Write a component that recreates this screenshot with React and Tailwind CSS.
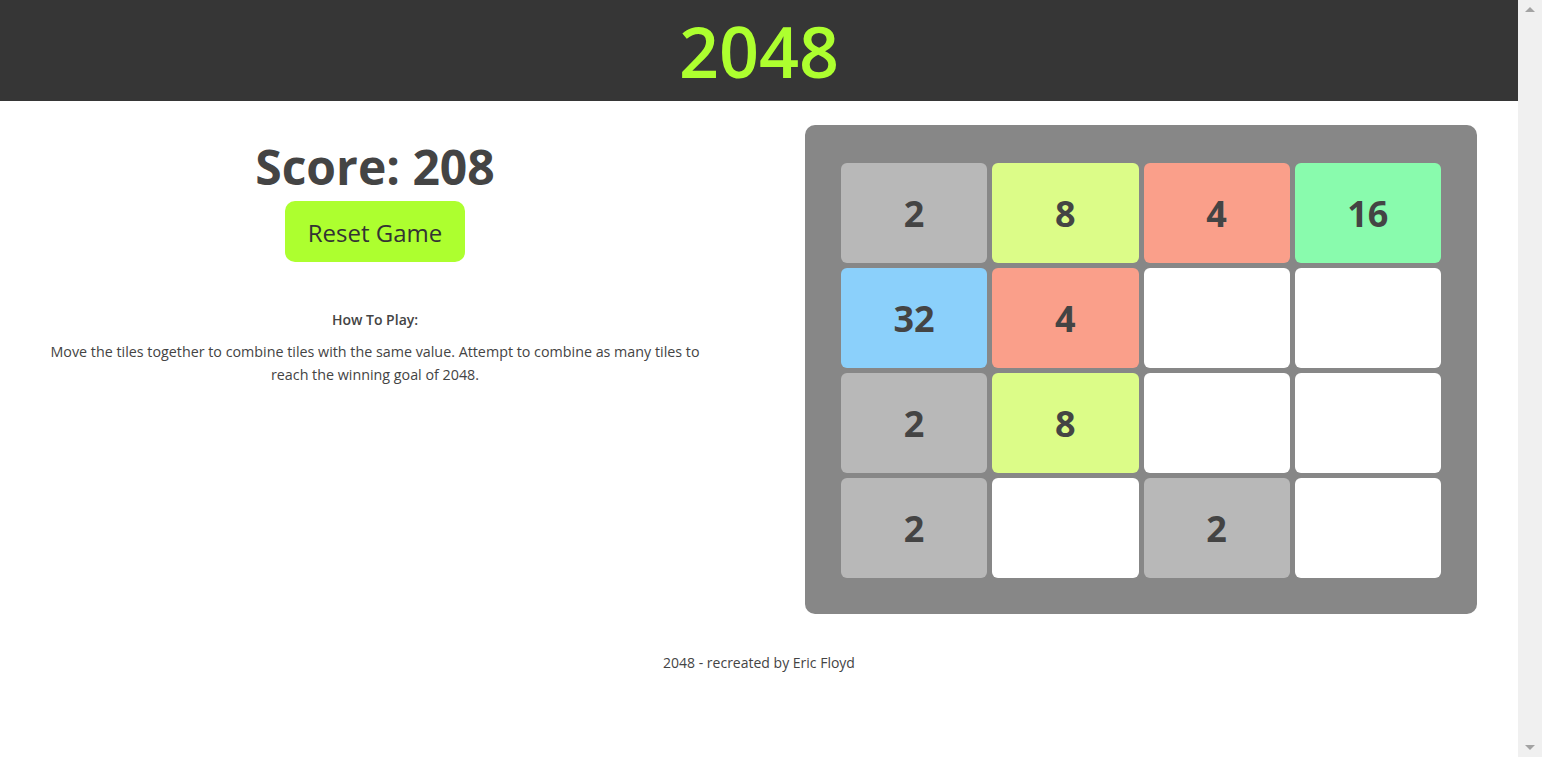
const BOARD = [
  [2, 8, 4, 16],
  [32, 4, 0, 0],
  [2, 8, 0, 0],
  [2, 0, 2, 0],
];

const TILE_BG = {
  0: 'bg-white',
  2: 'bg-[#b8b8b8]',
  4: 'bg-[#fa9f8a]',
  8: 'bg-[#dcfc88]',
  16: 'bg-[#89fbad]',
  32: 'bg-[#8bd0fb]',
};

function Tile({ value }) {
  return (
    <div
      className={`flex items-center justify-center rounded-[6px] pt-[2px] text-[36px] font-bold text-[#444] ${TILE_BG[value]}`}
    >
      {value > 0 ? value : ''}
    </div>
  );
}

function Scrollbar() {
  return (
    <div className="flex w-[24px] flex-col items-center justify-between bg-[#f0f0f0] py-[7px]">
      <span className="h-0 w-0 border-x-[5px] border-b-[5px] border-x-transparent border-b-[#a3a3a3]" />
      <span className="h-0 w-0 border-x-[5px] border-t-[5px] border-x-transparent border-t-[#a3a3a3]" />
    </div>
  );
}

export default function App() {
  return (
    <div className="flex h-[757px] font-['Open_Sans',sans-serif] text-[#444]">
      <div className="flex min-w-0 flex-1 flex-col bg-white">
        <header className="flex h-[101px] items-center justify-center bg-[#363636]">
          <h1 className="text-[70px] font-semibold leading-none text-[#adff2f]">2048</h1>
        </header>

        <main className="flex pt-[24px]">
          <section className="flex w-[750px] flex-col items-center pt-[12px]">
            <h2 className="text-[48px] font-bold leading-[60px]">Score: 208</h2>
            <button className="mt-[4px] h-[61px] w-[180px] rounded-[10px] bg-[#adff2f] pt-[2px] text-[24px] text-[#333]">
              Reset Game
            </button>
            <h3 className="mt-[48px] text-[14px] font-semibold leading-[20px]">How To Play:</h3>
            <p className="mt-[10px] w-[670px] text-center text-[14.3px] leading-[23px]">
              Move the tiles together to combine tiles with the same value. Attempt to combine as many tiles to
              reach the winning goal of 2048.
            </p>
          </section>

          <section className="ml-[55px] w-[672px] rounded-[10px] bg-[#878787] px-[36px] pb-[36px] pt-[38px]">
            <div className="grid grid-cols-4 grid-rows-[repeat(4,100px)] gap-[5px]">
              {BOARD.flat().map((v, i) => (
                <Tile key={i} value={v} />
              ))}
            </div>
          </section>
        </main>

        <footer className="mt-[38px] text-center text-[14px]">2048 - recreated by Eric Floyd</footer>
      </div>
      <Scrollbar />
    </div>
  );
}
